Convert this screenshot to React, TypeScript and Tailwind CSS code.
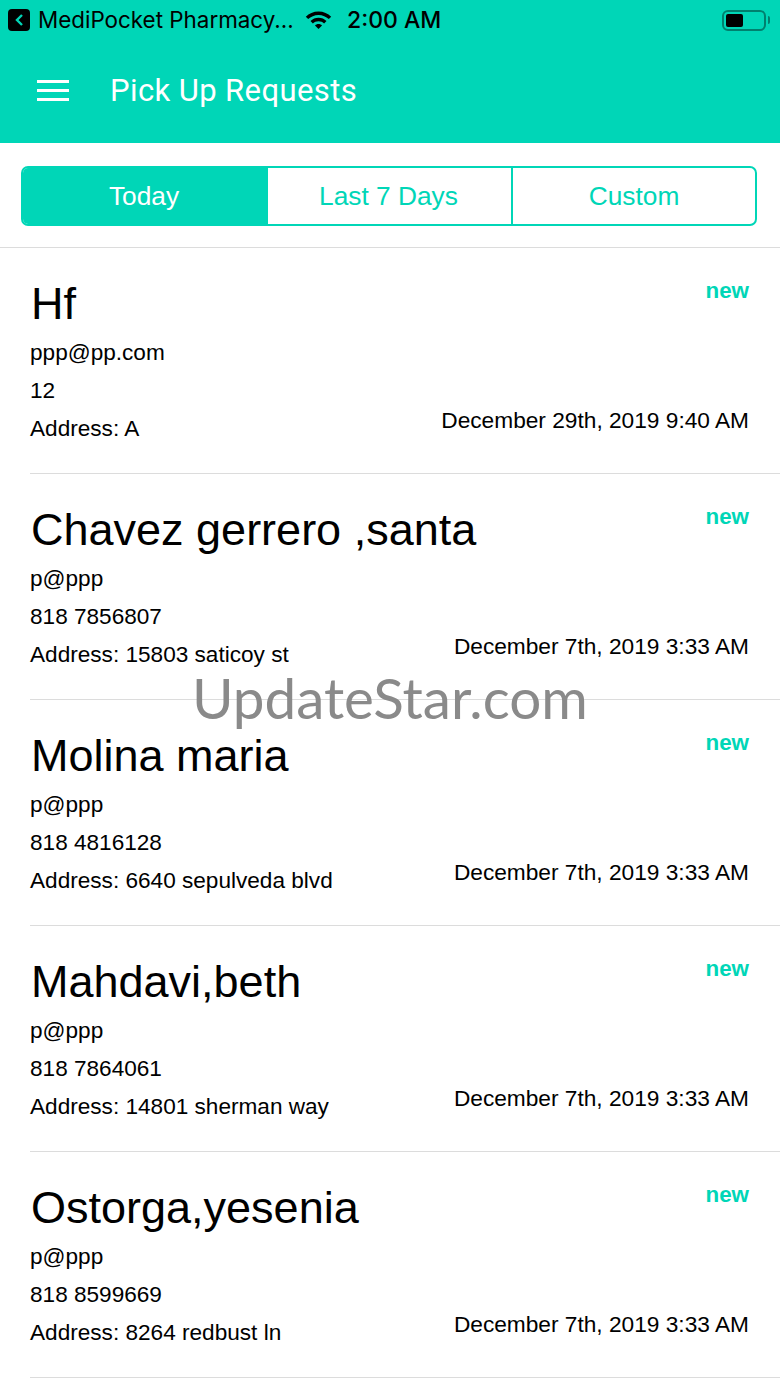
const REQUESTS = [
  { name: 'Hf', email: 'ppp@pp.com', phone: '12', address: 'A', date: 'December 29th, 2019 9:40 AM' },
  { name: 'Chavez gerrero ,santa', email: 'p@ppp', phone: '818 7856807', address: '15803 saticoy st', date: 'December 7th, 2019 3:33 AM' },
  { name: 'Molina maria', email: 'p@ppp', phone: '818 4816128', address: '6640 sepulveda blvd', date: 'December 7th, 2019 3:33 AM' },
  { name: 'Mahdavi,beth', email: 'p@ppp', phone: '818 7864061', address: '14801 sherman way', date: 'December 7th, 2019 3:33 AM' },
  { name: 'Ostorga,yesenia', email: 'p@ppp', phone: '818 8599669', address: '8264 redbust ln', date: 'December 7th, 2019 3:33 AM' },
]

function StatusBar() {
  return (
    <div className="flex h-[40px] items-center pl-[8px] pr-[10px] font-['Inter'] text-black">
      <div className="flex h-[22px] w-[22px] items-center justify-center rounded-[4px] bg-black">
        <svg width="10" height="14" viewBox="0 0 10 14" fill="none">
          <path d="M8 2 L3 7 L8 12" stroke="#00d6b7" strokeWidth="2.4" />
        </svg>
      </div>
      <span className="ml-[8px] w-[267px] whitespace-nowrap text-[22.4px]">MediPocket Pharmacy...</span>
      <svg width="27" height="20" viewBox="0 0 27 20" fill="black">
        <path d="M13.5 1.5C8.4 1.5 4 3.5.8 6.7l2.4 2.4c2.6-2.6 6.3-4.2 10.3-4.2s7.7 1.6 10.3 4.2l2.4-2.4C23 3.5 18.600 1.500 13.500 1.500z" />
        <path d="M13.500 7.800c-3.100 0-5.900 1.200-8 3.300l2.400 2.400c1.400-1.400 3.400-2.300 5.600-2.300s4.200.9 5.600 2.300l2.400-2.400c-2.100-2.100-4.900-3.300-8-3.300z" />
        <path d="M13.500 14c-1.400 0-2.600.6-3.500 1.400l3.500 3.600 3.500-3.600c-.9-.8-2.100-1.400-3.500-1.400z" />
      </svg>
      <span className="ml-[15px] text-[23px] font-medium leading-none">2:00 AM</span>
      <div className="ml-auto flex items-center">
        <div className="flex h-[21px] w-[44px] items-center rounded-[6px] border-2 border-[#00806e] p-[2px]">
          <div className="h-full w-[17px] rounded-[2px] bg-black" />
        </div>
        <div className="ml-[2px] h-[8px] w-[2px] rounded-r-full bg-[#00806e]" />
      </div>
    </div>
  )
}

function Header() {
  return (
    <div className="h-[143px] bg-[#00d6b7]">
      <StatusBar />
      <div className="flex items-center pl-[37px] pt-[31px] text-white">
        <div className="mb-[2px] flex w-[32px] flex-col gap-[6px]">
          <div className="h-[3px] bg-white" />
          <div className="h-[3px] bg-white" />
          <div className="h-[3px] bg-white" />
        </div>
        <h1 className="ml-[41px] font-['Roboto'] text-[31px] font-normal leading-[40px] tracking-[0.4px]">Pick Up Requests</h1>
      </div>
    </div>
  )
}

function Tabs() {
  return (
    <div className="border-b border-[#dcdcdc] pb-[21px] pl-[21px] pr-[23px] pt-[23px]">
      <div className="flex h-[60px] overflow-hidden rounded-[7px] border-2 border-[#00d6b7] text-[26.3px]">
        <div className="flex w-[245px] items-center justify-center bg-[#00d6b7] pr-[3px] pt-[1px] text-white">Today</div>
        <div className="flex w-[245px] items-center justify-center border-r-2 border-[#00d6b7] pr-[2px] pt-[1px] text-[#00d6b7]">Last 7 Days</div>
        <div className="flex flex-1 items-center justify-center pt-[1px] text-[#00d6b7]">Custom</div>
      </div>
    </div>
  )
}

function RequestRow({ name, email, phone, address, date }: (typeof REQUESTS)[number]) {
  return (
    <div className="ml-[30px] flex h-[226px] justify-between border-b border-[#dcdcdc] pr-[31px] text-black">
      <div className="min-w-0 flex-1 pt-[25px]">
        <div className="ml-[1px] whitespace-nowrap text-[45px] leading-[62px]">{name}</div>
        <div className="mt-[-1px] text-[22.6px] leading-[38px]">{email}</div>
        <div className="text-[22.6px] leading-[38px]">{phone}</div>
        <div className="text-[22.6px] leading-[38px]">Address: {address}</div>
      </div>
      <div className="flex shrink-0 flex-col items-end pt-[29px]">
        <span className="text-[22.4px] font-bold leading-[28px] text-[#00d6b7]">new</span>
        <span className="mt-[101px] whitespace-nowrap text-[22.7px] leading-[28px]">{date}</span>
      </div>
    </div>
  )
}

export default function App() {
  return (
    <div className="relative h-[1387px] w-[780px] overflow-hidden bg-white font-['Liberation_Sans',sans-serif]">
      <Header />
      <Tabs />
      {REQUESTS.map((r) => (
        <RequestRow key={r.name} {...r} />
      ))}
      <div className="absolute left-[192px] top-[657px] whitespace-nowrap font-['Lato'] text-[56.6px] leading-[80px] text-[#8a8a8a]">UpdateStar.com</div>
    </div>
  )
}
